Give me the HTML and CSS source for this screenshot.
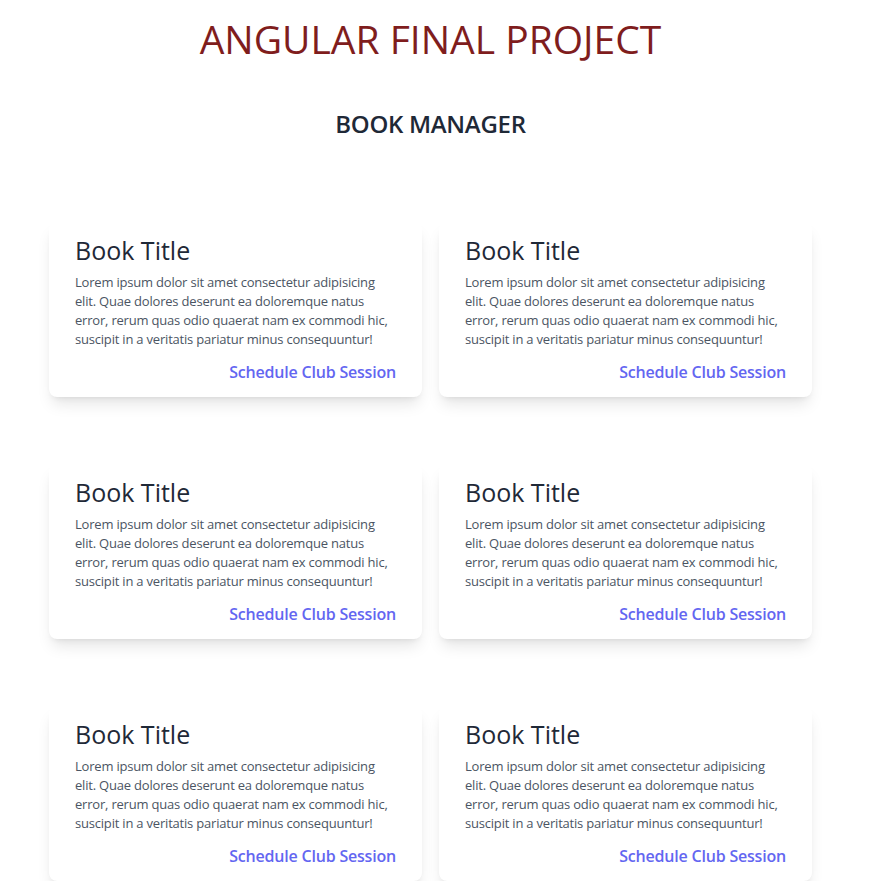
FILE: index.html
```html
<!DOCTYPE html>
<html lang="en">
<head>
<meta charset="utf-8">
<title>Angular Final Project</title>
<link rel="stylesheet" href="styles.css">
</head>
<body>
<div class="page">
  <h1 class="site-title">ANGULAR FINAL PROJECT</h1>
  <h2 class="section-title">BOOK MANAGER</h2>
  <div class="book-grid">
    <div class="card">
      <h3 class="card-title">Book Title</h3>
      <p class="card-text">Lorem ipsum dolor sit amet consectetur adipisicing elit. Quae dolores deserunt ea doloremque natus error, rerum quas odio quaerat nam ex commodi hic, suscipit in a veritatis pariatur minus consequuntur!</p>
      <div class="card-actions"><a class="card-link" href="#">Schedule Club Session</a></div>
    </div>
    <div class="card">
      <h3 class="card-title">Book Title</h3>
      <p class="card-text">Lorem ipsum dolor sit amet consectetur adipisicing elit. Quae dolores deserunt ea doloremque natus error, rerum quas odio quaerat nam ex commodi hic, suscipit in a veritatis pariatur minus consequuntur!</p>
      <div class="card-actions"><a class="card-link" href="#">Schedule Club Session</a></div>
    </div>
    <div class="card">
      <h3 class="card-title">Book Title</h3>
      <p class="card-text">Lorem ipsum dolor sit amet consectetur adipisicing elit. Quae dolores deserunt ea doloremque natus error, rerum quas odio quaerat nam ex commodi hic, suscipit in a veritatis pariatur minus consequuntur!</p>
      <div class="card-actions"><a class="card-link" href="#">Schedule Club Session</a></div>
    </div>
    <div class="card">
      <h3 class="card-title">Book Title</h3>
      <p class="card-text">Lorem ipsum dolor sit amet consectetur adipisicing elit. Quae dolores deserunt ea doloremque natus error, rerum quas odio quaerat nam ex commodi hic, suscipit in a veritatis pariatur minus consequuntur!</p>
      <div class="card-actions"><a class="card-link" href="#">Schedule Club Session</a></div>
    </div>
    <div class="card">
      <h3 class="card-title">Book Title</h3>
      <p class="card-text">Lorem ipsum dolor sit amet consectetur adipisicing elit. Quae dolores deserunt ea doloremque natus error, rerum quas odio quaerat nam ex commodi hic, suscipit in a veritatis pariatur minus consequuntur!</p>
      <div class="card-actions"><a class="card-link" href="#">Schedule Club Session</a></div>
    </div>
    <div class="card">
      <h3 class="card-title">Book Title</h3>
      <p class="card-text">Lorem ipsum dolor sit amet consectetur adipisicing elit. Quae dolores deserunt ea doloremque natus error, rerum quas odio quaerat nam ex commodi hic, suscipit in a veritatis pariatur minus consequuntur!</p>
      <div class="card-actions"><a class="card-link" href="#">Schedule Club Session</a></div>
    </div>
  </div>
</div>
</body>
</html>
```
FILE: styles.css
```css
* { box-sizing: border-box; }
html, body { margin: 0; padding: 0; background: #ffffff; }
body {
  font-family: "Open Sans", "Noto Sans", sans-serif;
  color: #1f2937;
}
.page {
  width: 763px;
  margin-left: 49px;
  padding-top: 17px;
}
.site-title {
  margin: 0;
  text-align: center;
  font-weight: 400;
  font-size: 39px;
  line-height: 44px;
  color: #7f1d1d;
}
.section-title {
  margin: 47px 0 0;
  text-align: center;
  font-weight: 600;
  font-size: 24px;
  line-height: 32px;
  letter-spacing: -0.3px;
  color: #1f2937;
}
.book-grid {
  margin-top: 82px;
  display: grid;
  grid-template-columns: 373px 373px;
  column-gap: 17px;
  row-gap: 67px;
}
.card {
  height: 175px;
  background: #fff;
  border-radius: 8px;
  box-shadow: 0 10px 15px -3px rgba(0,0,0,0.1), 0 4px 6px -4px rgba(0,0,0,0.1);
  padding: 13px 26px 13px 26px;
  display: flex;
  flex-direction: column;
}
.card-title {
  margin: 0;
  font-weight: 400;
  font-size: 25px;
  line-height: 30px;
  color: #1f2937;
}
.card-text {
  margin: 8px 0 0;
  font-size: 13px;
  line-height: 19px;
  letter-spacing: -0.2px;
  color: #4b5563;
}
.card-actions {
  margin-top: auto;
  text-align: right;
}
.card-link {
  font-size: 16px;
  line-height: 24px;
  font-weight: 600;
  letter-spacing: -0.2px;
  color: #6366f1;
  text-decoration: none;
}
```
